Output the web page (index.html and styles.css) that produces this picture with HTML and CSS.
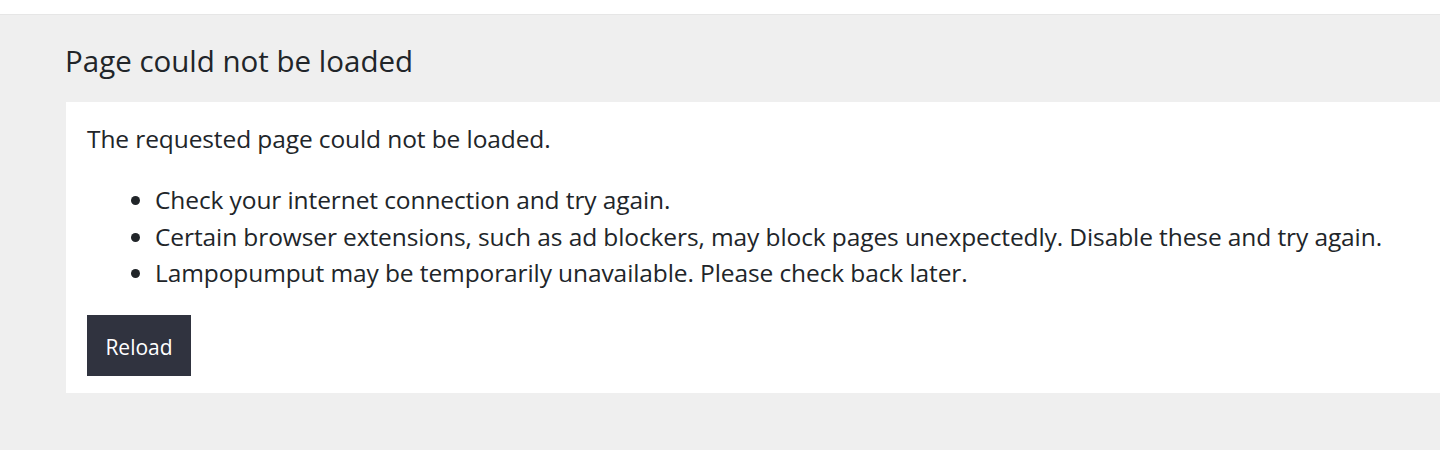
FILE: index.html
```html
<!DOCTYPE html>
<html lang="en">
<head>
<meta charset="utf-8">
<title>Page could not be loaded</title>
<link rel="stylesheet" href="styles.css">
</head>
<body>
<div class="topbar"></div>
<main class="page">
  <h1 class="title">Page could not be loaded</h1>
  <section class="panel">
    <p class="lead">The requested page could not be loaded.</p>
    <ul class="tips">
      <li>Check your internet connection and try again.</li>
      <li>Certain browser extensions, such as ad blockers, may block pages unexpectedly. Disable these and try again.</li>
      <li>Lampopumput may be temporarily unavailable. Please check back later.</li>
    </ul>
    <button class="reload" type="button">Reload</button>
  </section>
</main>
</body>
</html>
```

FILE: styles.css
```css
html, body {
  margin: 0;
  padding: 0;
}
body {
  background: #efefef;
  font-family: "Open Sans", "Noto Sans", sans-serif;
  color: #212529;
  height: 450px;
  overflow: hidden;
}
.topbar {
  height: 14px;
  background: #ffffff;
  border-bottom: 1px solid #e6e6e6;
}
.page {
  padding: 0 0 0 66px;
}
.title {
  margin: 0 0 0 -1px;
  padding: 26px 0 0 0;
  font-size: 29.5px;
  font-weight: 400;
  line-height: 40px;
  height: 60px;
  box-sizing: border-box;
}
.panel {
  background: #ffffff;
  margin-top: 27px;
  padding: 19px 21px 17px 21px;
}
.lead {
  margin: 0;
  font-size: 24.5px;
  line-height: 36px;
  letter-spacing: -0.1px;
}
.tips {
  margin: 25px 0 23px 0;
  padding-left: 68px;
  font-size: 24.5px;
  line-height: 36.5px;
  letter-spacing: -0.1px;
}
.reload {
  display: block;
  background: #30333f;
  color: #ffffff;
  border: none;
  border-radius: 0;
  font-family: inherit;
  font-size: 21px;
  width: 104px;
  height: 61px;
  padding: 4px 0 0 0;
  cursor: pointer;
}
```
